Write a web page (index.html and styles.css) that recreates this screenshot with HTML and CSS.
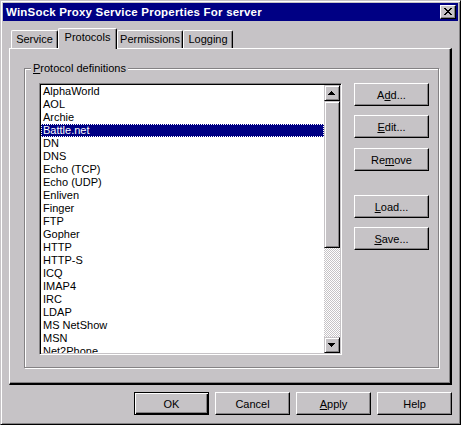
FILE: index.html
```html
<!DOCTYPE html>
<html>
<head>
<meta charset="utf-8">
<title>WinSock Proxy Service Properties For server</title>
<link rel="stylesheet" href="styles.css">
</head>
<body>
<div class="window">
  <div class="titlebar">
    <span class="title">WinSock Proxy Service Properties For server</span>
    <button class="close" aria-label="Close">
      <svg class="close-glyph" width="8" height="7" viewBox="0 0 8 7"><path d="M0 0h2v1H0zM6 0h2v1H6zM1 1h2v1H1zM5 1h2v1H5zM2 2h4v1H2zM3 3h2v1H3zM2 4h4v1H2zM1 5h2v1H1zM5 5h2v1H5zM0 6h2v1H0zM6 6h2v1H6z" fill="#000"/></svg>
    </button>
  </div>
  <div class="body">
    <div class="tabs">
      <div class="tab tab-service">Service</div>
      <div class="tab tab-protocols selected">Protocols</div>
      <div class="tab tab-permissions">Permissions</div>
      <div class="tab tab-logging">Logging</div>
    </div>
    <div class="panel">
      <div class="group">
        <div class="legend"><u>P</u>rotocol definitions</div>
        <div class="group-content">
          <div class="listbox">
            <ul class="items">
              <li>AlphaWorld</li>
              <li>AOL</li>
              <li>Archie</li>
              <li class="sel">Battle.net</li>
              <li>DN</li>
              <li>DNS</li>
              <li>Echo (TCP)</li>
              <li>Echo (UDP)</li>
              <li>Enliven</li>
              <li>Finger</li>
              <li>FTP</li>
              <li>Gopher</li>
              <li>HTTP</li>
              <li>HTTP-S</li>
              <li>ICQ</li>
              <li>IMAP4</li>
              <li>IRC</li>
              <li>LDAP</li>
              <li>MS NetShow</li>
              <li>MSN</li>
              <li>Net2Phone</li>
            </ul>
            <div class="scrollbar">
              <div class="sb-btn"><svg width="7" height="4" viewBox="0 0 7 4"><path d="M3 0h1v1H3zM2 1h3v1H2zM1 2h5v1H1zM0 3h7v1H0z" fill="#000"/></svg></div>
              <div class="sb-thumb"></div>
              <div class="sb-track"></div>
              <div class="sb-btn"><svg width="7" height="4" viewBox="0 0 7 4"><path d="M0 0h7v1H0zM1 1h5v1H1zM2 2h3v1H2zM3 3h1v1H3z" fill="#000"/></svg></div>
            </div>
          </div>
          <div class="side-buttons">
            <button class="btn">A<u>d</u>d...</button>
            <button class="btn"><u>E</u>dit...</button>
            <button class="btn btn-remove">Re<u>m</u>ove</button>
            <button class="btn btn-load"><u>L</u>oad...</button>
            <button class="btn"><u>S</u>ave...</button>
          </div>
        </div>
      </div>
    </div>
    <div class="dialog-buttons">
      <button class="btn default">OK</button>
      <button class="btn">Cancel</button>
      <button class="btn"><u>A</u>pply</button>
      <button class="btn">Help</button>
    </div>
  </div>
</div>
</body>
</html>
```

FILE: styles.css
```css
* { box-sizing: border-box; }
html, body { margin: 0; padding: 0; }
body {
  width: 461px;
  height: 425px;
  overflow: hidden;
  background: #c6c3c6;
  font-family: "Liberation Sans", Arial, sans-serif;
  font-size: 11px;
  color: #000;
}
.window {
  width: 461px;
  height: 425px;
  display: flex;
  flex-direction: column;
  background: #c6c3c6;
  border: 1px solid;
  border-color: #c6c3c6 #000 #000 #c6c3c6;
  box-shadow: inset 1px 1px #fff, inset -1px -1px #848284;
  padding: 2px;
}
.titlebar {
  height: 18px;
  flex: none;
  display: flex;
  align-items: center;
  background: #000084;
  color: #fff;
  padding: 0 2px 0 3px;
}
.title {
  flex: 1;
  font-weight: bold;
  font-size: 11.5px;
  letter-spacing: 0.2px;
  white-space: nowrap;
  line-height: 18px;
}
button {
  font: inherit;
  color: #000;
  margin: 0;
  padding: 0;
  background: #c6c3c6;
}
.close {
  width: 16px;
  height: 14px;
  display: flex;
  align-items: center;
  justify-content: center;
  border: 1px solid;
  border-color: #fff #000 #000 #fff;
  box-shadow: inset -1px -1px #848284;
  padding: 0 1px 1px 0;
}
.close-glyph { display: block; shape-rendering: crispEdges; }

.body {
  flex: 1;
  display: flex;
  flex-direction: column;
  padding: 7px 6px 0 6px;
}
.tabs {
  height: 20px;
  display: flex;
  align-items: flex-end;
  padding-left: 2px;
  flex: none;
}
.tab {
  height: 18px;
  border-left: 1px solid #fff;
  border-top: 1px solid #fff;
  border-right: 1px solid #000;
  border-radius: 2px 2px 0 0;
  box-shadow: inset -1px 0 #848284;
  text-align: center;
  line-height: 16px;
  background: #c6c3c6;
}
.tab-service { width: 47px; }
.tab-protocols { width: 59px; }
.tab-permissions { width: 66px; }
.tab-logging { width: 50px; }
.tab.selected {
  height: 21px;
  margin-bottom: -1px;
  position: relative;
  z-index: 1;
  line-height: 17px;
}
.panel {
  height: 337px;
  flex: none;
  display: flex;
  flex-direction: column;
  border-top: 1px solid #fff;
  border-left: 1px solid #fff;
  border-right: 2px solid #000;
  border-bottom: 2px solid #000;
  box-shadow: inset -1px -1px #848284;
  padding: 19px 11px 15px 14px;
}
.group {
  flex: 1;
  display: flex;
  flex-direction: column;
  border: 1px solid #848284;
  box-shadow: inset 1px 1px #fff, 1px 1px #fff;
  padding: 0 9px 12px 14px;
}
.legend {
  align-self: flex-start;
  height: 13px;
  line-height: 13px;
  margin: -7px 0 0 -8px;
  padding: 0 2px 0 2px;
  background: #c6c3c6;
}
.group-content {
  margin-top: 8px;
  height: 272px;
  display: flex;
  gap: 12px;
}
.listbox {
  width: 303px;
  height: 272px;
  display: flex;
  background: #fff;
  border: 1px solid;
  border-color: #848284 #fff #fff #848284;
  box-shadow: inset 1px 1px #000, inset -1px -1px #c6c3c6;
  padding: 1px;
}
.items {
  flex: 1;
  list-style: none;
  margin: 0;
  padding: 0;
  overflow: hidden;
}
.items li {
  height: 13px;
  line-height: 13px;
  padding-left: 2px;
  white-space: nowrap;
}
.items li.sel {
  background: #000084;
  color: #fff;
  outline: 1px dotted #fff;
  outline-offset: -1px;
}
.scrollbar {
  width: 16px;
  display: flex;
  flex-direction: column;
}
.sb-btn {
  height: 16px;
  flex: none;
  display: flex;
  align-items: center;
  justify-content: center;
  background: #c6c3c6;
  border: 1px solid;
  border-color: #c6c3c6 #000 #000 #c6c3c6;
  box-shadow: inset 1px 1px #fff, inset -1px -1px #848284;
  padding: 0 1px 1px 0;
}
.sb-btn svg { display: block; shape-rendering: crispEdges; }
.sb-thumb {
  height: 147px;
  flex: none;
  background: #c6c3c6;
  border: 1px solid;
  border-color: #c6c3c6 #000 #000 #c6c3c6;
  box-shadow: inset 1px 1px #fff, inset -1px -1px #848284;
}
.sb-track {
  flex: 1;
  background: repeating-conic-gradient(#fff 0 25%, #c6c3c6 0 50%) 0 0 / 2px 2px;
}
.side-buttons {
  width: 75px;
  display: flex;
  flex-direction: column;
  gap: 9px;
}
.btn {
  width: 75px;
  height: 23px;
  flex: none;
  border: 1px solid;
  border-color: #fff #000 #000 #fff;
  box-shadow: inset -1px -1px #848284;
  text-align: center;
  line-height: 20px;
  cursor: default;
}
.btn-remove { margin-top: 1px; }
.btn-load { margin-top: 15px; }
.btn.default {
  border-color: #000;
  box-shadow: inset 1px 1px #fff, inset -1px -1px #000, inset -2px -2px #848284;
}
.dialog-buttons {
  margin-top: 7px;
  display: flex;
  justify-content: flex-end;
  gap: 6px;
  flex: none;
}
u { text-decoration: underline; text-underline-offset: 1px; }
```
